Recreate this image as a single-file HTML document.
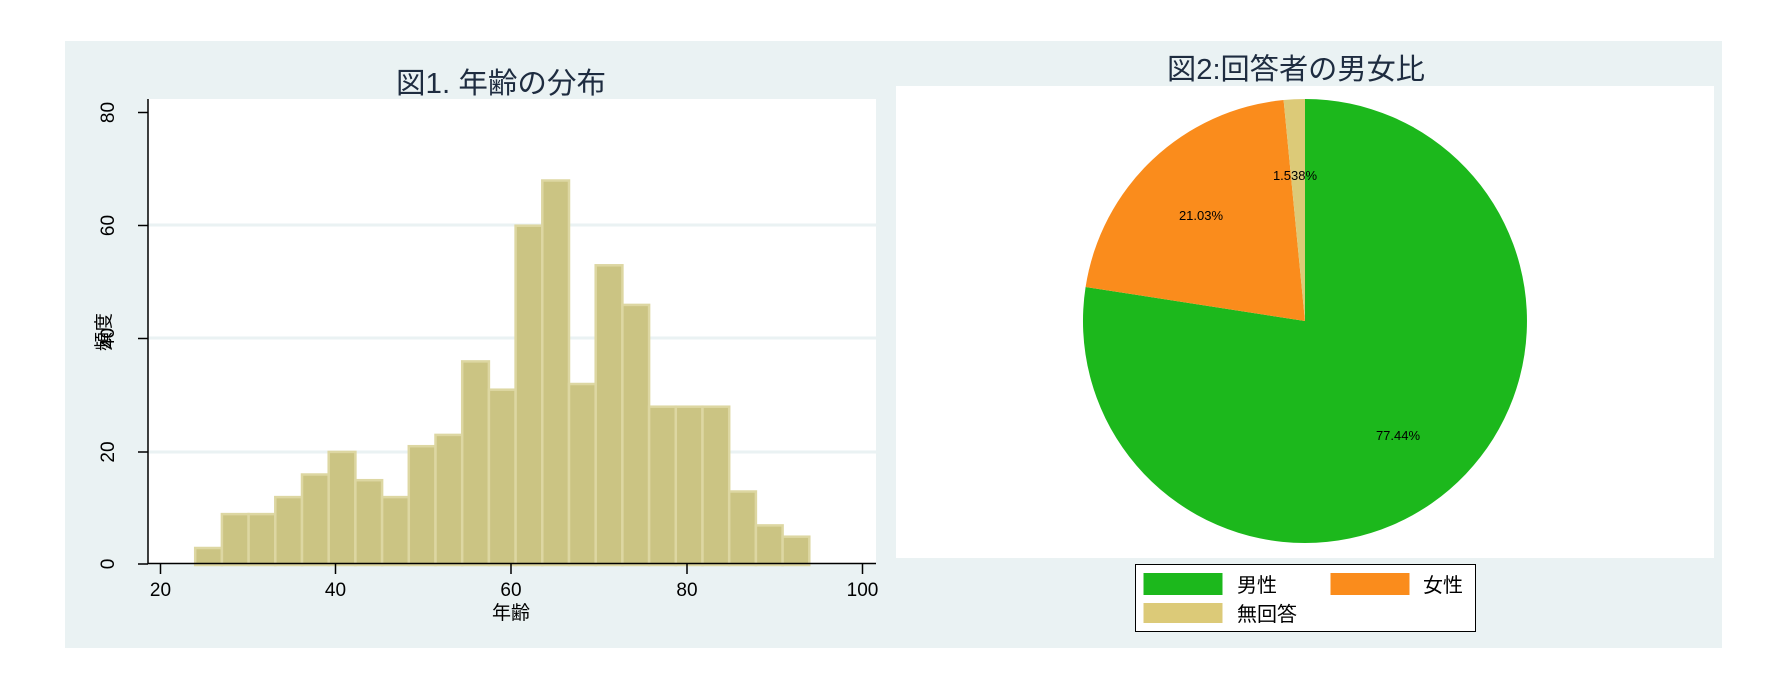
<!DOCTYPE html>
<html><head><meta charset="utf-8"><style>
html,body{margin:0;padding:0;background:#fff;}
svg{display:block;}
text{font-family:"Liberation Sans","Noto Sans CJK JP",sans-serif;}
</style></head><body>
<svg width="1779" height="684" viewBox="0 0 1779 684" xmlns="http://www.w3.org/2000/svg">
<rect x="0" y="0" width="1779" height="684" fill="#fff"/>
<rect x="65" y="41" width="1657" height="607" fill="#eaf2f3"/>
<rect x="148" y="99" width="728" height="465" fill="#fff"/>
<g stroke="#eaf2f3" stroke-width="3">
<line x1="148" y1="225" x2="876" y2="225"/>
<line x1="148" y1="338" x2="876" y2="338"/>
<line x1="148" y1="452" x2="876" y2="452"/>
</g>
<text x="396" y="93" font-size="29" fill="#1e2c40" textLength="210" lengthAdjust="spacingAndGlyphs">図1. 年齢の分布</text>
<g fill="#cbc483" stroke="#ddd7a2" stroke-width="2.5">
<rect x="195.2" y="548" width="26.7" height="17"/>
<rect x="221.9" y="514.1" width="26.7" height="50.9"/>
<rect x="248.6" y="514.1" width="26.7" height="50.9"/>
<rect x="275.3" y="497.1" width="26.7" height="67.9"/>
<rect x="302.0" y="474.5" width="26.7" height="90.5"/>
<rect x="328.7" y="451.9" width="26.7" height="113.1"/>
<rect x="355.4" y="480.2" width="26.7" height="84.8"/>
<rect x="382.1" y="497.1" width="26.7" height="67.9"/>
<rect x="408.8" y="446.2" width="26.7" height="118.8"/>
<rect x="435.5" y="434.9" width="26.7" height="130.1"/>
<rect x="462.2" y="361.4" width="26.7" height="203.6"/>
<rect x="488.9" y="389.7" width="26.7" height="175.3"/>
<rect x="515.6" y="225.7" width="26.7" height="339.3"/>
<rect x="542.3" y="180.5" width="26.7" height="384.5"/>
<rect x="569.0" y="384" width="26.7" height="181"/>
<rect x="595.7" y="265.3" width="26.7" height="299.7"/>
<rect x="622.4" y="304.9" width="26.7" height="260.1"/>
<rect x="649.1" y="406.7" width="26.7" height="158.3"/>
<rect x="675.8" y="406.7" width="26.7" height="158.3"/>
<rect x="702.5" y="406.7" width="26.7" height="158.3"/>
<rect x="729.2" y="491.5" width="26.7" height="73.5"/>
<rect x="755.9" y="525.4" width="26.7" height="39.6"/>
<rect x="782.6" y="536.7" width="26.7" height="28.3"/>
</g>
<g stroke="#000" stroke-width="1.5">
<line x1="148" y1="99" x2="148" y2="564"/>
<line x1="148" y1="563.5" x2="876" y2="563.5"/>
<line x1="138" y1="112.5" x2="148" y2="112.5"/>
<line x1="138" y1="225.5" x2="148" y2="225.5"/>
<line x1="138" y1="338.5" x2="148" y2="338.5"/>
<line x1="138" y1="452" x2="148" y2="452"/>
<line x1="138" y1="564" x2="148" y2="564"/>
<line x1="160.5" y1="564" x2="160.5" y2="574"/>
<line x1="335.5" y1="564" x2="335.5" y2="574"/>
<line x1="511" y1="564" x2="511" y2="574"/>
<line x1="687" y1="564" x2="687" y2="574"/>
<line x1="862.5" y1="564" x2="862.5" y2="574"/>
</g>
<g font-size="19" fill="#000" text-anchor="middle">
<text transform="translate(114,112.5) rotate(-90)">80</text>
<text transform="translate(114,225.5) rotate(-90)">60</text>
<text transform="translate(114,338.5) rotate(-90)">40</text>
<text transform="translate(114,452) rotate(-90)">20</text>
<text transform="translate(114,564) rotate(-90)">0</text>
<text x="160.5" y="596">20</text>
<text x="335.5" y="596">40</text>
<text x="511" y="596">60</text>
<text x="687" y="596">80</text>
<text x="862.5" y="596">100</text>
<text x="511" y="619">年齢</text>
<text transform="translate(110,332) rotate(-90)">頻度</text>
</g>
<rect x="896" y="86" width="818" height="472" fill="#fff"/>
<text x="1167" y="79" font-size="29" fill="#1e2c40" textLength="258" lengthAdjust="spacingAndGlyphs">図2:回答者の男女比</text>
<path d="M1305,321 L1305,99 A222,222 0 1 1 1085.6,287 Z" fill="#1cb81c"/>
<path d="M1305,321 L1085.6,287 A222,222 0 0 1 1283.6,100 Z" fill="#fa8c1c"/>
<path d="M1305,321 L1283.6,100 A222,222 0 0 1 1305,99 Z" fill="#dcca78"/>
<g font-size="13" fill="#000" text-anchor="middle">
<text x="1295" y="180">1.538%</text>
<text x="1201" y="220">21.03%</text>
<text x="1398" y="440">77.44%</text>
</g>
<rect x="1135.5" y="564.5" width="340" height="67" fill="#fff" stroke="#000" stroke-width="1"/>
<rect x="1143.5" y="573" width="79" height="22" fill="#1cb81c"/>
<rect x="1330.5" y="573" width="79" height="22" fill="#fa8c1c"/>
<rect x="1143.5" y="603" width="79" height="20" fill="#dcca78"/>
<g font-size="20" fill="#000">
<text x="1237" y="592">男性</text>
<text x="1423" y="592">女性</text>
<text x="1237" y="621">無回答</text>
</g>
</svg>
</body></html>
